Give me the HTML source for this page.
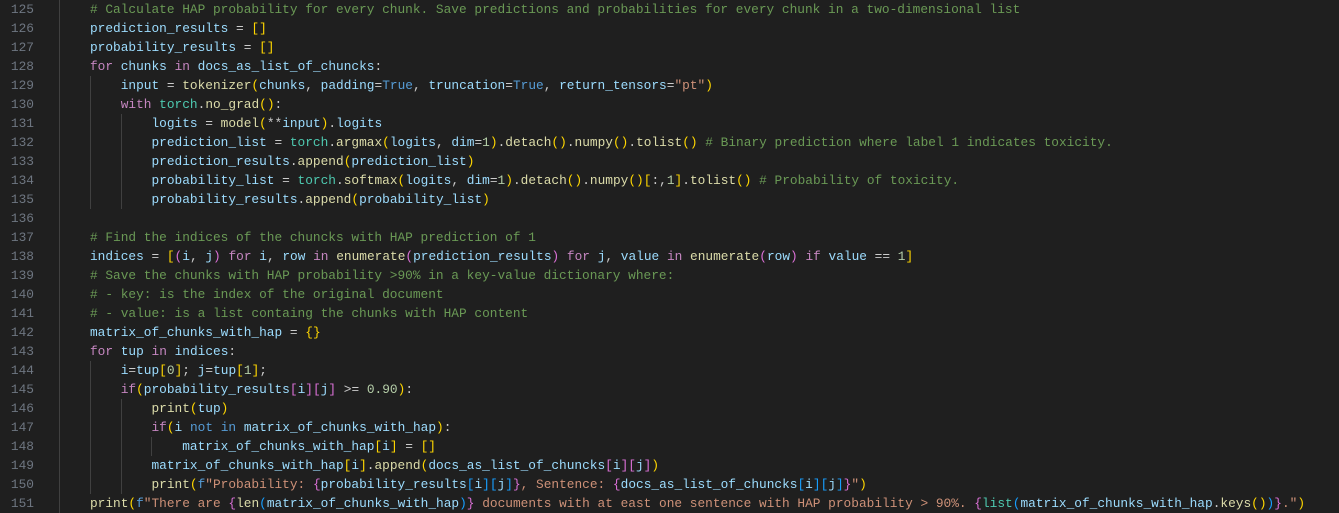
<!DOCTYPE html>
<html><head><meta charset="utf-8"><style>
html,body{margin:0;padding:0;background:#1f1f1f;width:1339px;height:513px;overflow:hidden}
.ed{position:relative;font-family:"Liberation Mono",monospace;font-size:12.82px;}
.l{height:19.02px;line-height:19.02px;white-space:pre;position:relative}
.n{position:absolute;left:0;width:34px;text-align:right;color:#6e7681}
.t{position:absolute;left:59.2px;color:#cccccc}
.g{display:inline-block;width:30.76px;box-shadow:inset 1px 0 0 #404040;height:19.02px;vertical-align:top}
.c{color:#6a9955}.v{color:#9cdcfe}.f{color:#dcdcaa}.k{color:#c586c0}.b{color:#569cd6}.s{color:#ce9178}.u{color:#b5cea8}.m{color:#4ec9b0}
.p1{color:#ffd700}.p2{color:#da70d6}.p3{color:#179fff}
</style></head><body><div class="ed">
<div class="l"><span class="n">125</span><span class="t"><span class="g"></span><span class="c"># Calculate HAP probability for every chunk. Save predictions and probabilities for every chunk in a two-dimensional list</span></span></div>
<div class="l"><span class="n">126</span><span class="t"><span class="g"></span><span class="v">prediction_results</span> = <span class="p1">[]</span></span></div>
<div class="l"><span class="n">127</span><span class="t"><span class="g"></span><span class="v">probability_results</span> = <span class="p1">[]</span></span></div>
<div class="l"><span class="n">128</span><span class="t"><span class="g"></span><span class="k">for</span> <span class="v">chunks</span> <span class="k">in</span> <span class="v">docs_as_list_of_chuncks</span>:</span></div>
<div class="l"><span class="n">129</span><span class="t"><span class="g"></span><span class="g"></span><span class="v">input</span> = <span class="f">tokenizer</span><span class="p1">(</span><span class="v">chunks</span>, <span class="v">padding</span>=<span class="b">True</span>, <span class="v">truncation</span>=<span class="b">True</span>, <span class="v">return_tensors</span>=<span class="s">"pt"</span><span class="p1">)</span></span></div>
<div class="l"><span class="n">130</span><span class="t"><span class="g"></span><span class="g"></span><span class="k">with</span> <span class="m">torch</span>.<span class="f">no_grad</span><span class="p1">()</span>:</span></div>
<div class="l"><span class="n">131</span><span class="t"><span class="g"></span><span class="g"></span><span class="g"></span><span class="v">logits</span> = <span class="f">model</span><span class="p1">(</span>**<span class="v">input</span><span class="p1">)</span>.<span class="v">logits</span></span></div>
<div class="l"><span class="n">132</span><span class="t"><span class="g"></span><span class="g"></span><span class="g"></span><span class="v">prediction_list</span> = <span class="m">torch</span>.<span class="f">argmax</span><span class="p1">(</span><span class="v">logits</span>, <span class="v">dim</span>=<span class="u">1</span><span class="p1">)</span>.<span class="f">detach</span><span class="p1">()</span>.<span class="f">numpy</span><span class="p1">()</span>.<span class="f">tolist</span><span class="p1">()</span> <span class="c"># Binary prediction where label 1 indicates toxicity.</span></span></div>
<div class="l"><span class="n">133</span><span class="t"><span class="g"></span><span class="g"></span><span class="g"></span><span class="v">prediction_results</span>.<span class="f">append</span><span class="p1">(</span><span class="v">prediction_list</span><span class="p1">)</span></span></div>
<div class="l"><span class="n">134</span><span class="t"><span class="g"></span><span class="g"></span><span class="g"></span><span class="v">probability_list</span> = <span class="m">torch</span>.<span class="f">softmax</span><span class="p1">(</span><span class="v">logits</span>, <span class="v">dim</span>=<span class="u">1</span><span class="p1">)</span>.<span class="f">detach</span><span class="p1">()</span>.<span class="f">numpy</span><span class="p1">()</span><span class="p1">[</span>:,<span class="u">1</span><span class="p1">]</span>.<span class="f">tolist</span><span class="p1">()</span> <span class="c"># Probability of toxicity.</span></span></div>
<div class="l"><span class="n">135</span><span class="t"><span class="g"></span><span class="g"></span><span class="g"></span><span class="v">probability_results</span>.<span class="f">append</span><span class="p1">(</span><span class="v">probability_list</span><span class="p1">)</span></span></div>
<div class="l"><span class="n">136</span><span class="t"><span class="g"></span></span></div>
<div class="l"><span class="n">137</span><span class="t"><span class="g"></span><span class="c"># Find the indices of the chuncks with HAP prediction of 1</span></span></div>
<div class="l"><span class="n">138</span><span class="t"><span class="g"></span><span class="v">indices</span> = <span class="p1">[</span><span class="p2">(</span><span class="v">i</span>, <span class="v">j</span><span class="p2">)</span> <span class="k">for</span> <span class="v">i</span>, <span class="v">row</span> <span class="k">in</span> <span class="f">enumerate</span><span class="p2">(</span><span class="v">prediction_results</span><span class="p2">)</span> <span class="k">for</span> <span class="v">j</span>, <span class="v">value</span> <span class="k">in</span> <span class="f">enumerate</span><span class="p2">(</span><span class="v">row</span><span class="p2">)</span> <span class="k">if</span> <span class="v">value</span> == <span class="u">1</span><span class="p1">]</span></span></div>
<div class="l"><span class="n">139</span><span class="t"><span class="g"></span><span class="c"># Save the chunks with HAP probability &gt;90% in a key-value dictionary where:</span></span></div>
<div class="l"><span class="n">140</span><span class="t"><span class="g"></span><span class="c"># - key: is the index of the original document</span></span></div>
<div class="l"><span class="n">141</span><span class="t"><span class="g"></span><span class="c"># - value: is a list containg the chunks with HAP content</span></span></div>
<div class="l"><span class="n">142</span><span class="t"><span class="g"></span><span class="v">matrix_of_chunks_with_hap</span> = <span class="p1">{}</span></span></div>
<div class="l"><span class="n">143</span><span class="t"><span class="g"></span><span class="k">for</span> <span class="v">tup</span> <span class="k">in</span> <span class="v">indices</span>:</span></div>
<div class="l"><span class="n">144</span><span class="t"><span class="g"></span><span class="g"></span><span class="v">i</span>=<span class="v">tup</span><span class="p1">[</span><span class="u">0</span><span class="p1">]</span>; <span class="v">j</span>=<span class="v">tup</span><span class="p1">[</span><span class="u">1</span><span class="p1">]</span>;</span></div>
<div class="l"><span class="n">145</span><span class="t"><span class="g"></span><span class="g"></span><span class="k">if</span><span class="p1">(</span><span class="v">probability_results</span><span class="p2">[</span><span class="v">i</span><span class="p2">][</span><span class="v">j</span><span class="p2">]</span> &gt;= <span class="u">0.90</span><span class="p1">)</span>:</span></div>
<div class="l"><span class="n">146</span><span class="t"><span class="g"></span><span class="g"></span><span class="g"></span><span class="f">print</span><span class="p1">(</span><span class="v">tup</span><span class="p1">)</span></span></div>
<div class="l"><span class="n">147</span><span class="t"><span class="g"></span><span class="g"></span><span class="g"></span><span class="k">if</span><span class="p1">(</span><span class="v">i</span> <span class="b">not</span> <span class="b">in</span> <span class="v">matrix_of_chunks_with_hap</span><span class="p1">)</span>:</span></div>
<div class="l"><span class="n">148</span><span class="t"><span class="g"></span><span class="g"></span><span class="g"></span><span class="g"></span><span class="v">matrix_of_chunks_with_hap</span><span class="p1">[</span><span class="v">i</span><span class="p1">]</span> = <span class="p1">[]</span></span></div>
<div class="l"><span class="n">149</span><span class="t"><span class="g"></span><span class="g"></span><span class="g"></span><span class="v">matrix_of_chunks_with_hap</span><span class="p1">[</span><span class="v">i</span><span class="p1">]</span>.<span class="f">append</span><span class="p1">(</span><span class="v">docs_as_list_of_chuncks</span><span class="p2">[</span><span class="v">i</span><span class="p2">][</span><span class="v">j</span><span class="p2">]</span><span class="p1">)</span></span></div>
<div class="l"><span class="n">150</span><span class="t"><span class="g"></span><span class="g"></span><span class="g"></span><span class="f">print</span><span class="p1">(</span><span class="b">f</span><span class="s">"Probability: </span><span class="p2">{</span><span class="v">probability_results</span><span class="p3">[</span><span class="v">i</span><span class="p3">][</span><span class="v">j</span><span class="p3">]</span><span class="p2">}</span><span class="s">, Sentence: </span><span class="p2">{</span><span class="v">docs_as_list_of_chuncks</span><span class="p3">[</span><span class="v">i</span><span class="p3">][</span><span class="v">j</span><span class="p3">]</span><span class="p2">}</span><span class="s">"</span><span class="p1">)</span></span></div>
<div class="l"><span class="n">151</span><span class="t"><span class="g"></span><span class="f">print</span><span class="p1">(</span><span class="b">f</span><span class="s">"There are </span><span class="p2">{</span><span class="f">len</span><span class="p3">(</span><span class="v">matrix_of_chunks_with_hap</span><span class="p3">)</span><span class="p2">}</span><span class="s"> documents with at east one sentence with HAP probability &gt; 90%. </span><span class="p2">{</span><span class="m">list</span><span class="p3">(</span><span class="v">matrix_of_chunks_with_hap</span>.<span class="f">keys</span><span class="p1">()</span><span class="p3">)</span><span class="p2">}</span><span class="s">."</span><span class="p1">)</span></span></div>
</div></body></html>
